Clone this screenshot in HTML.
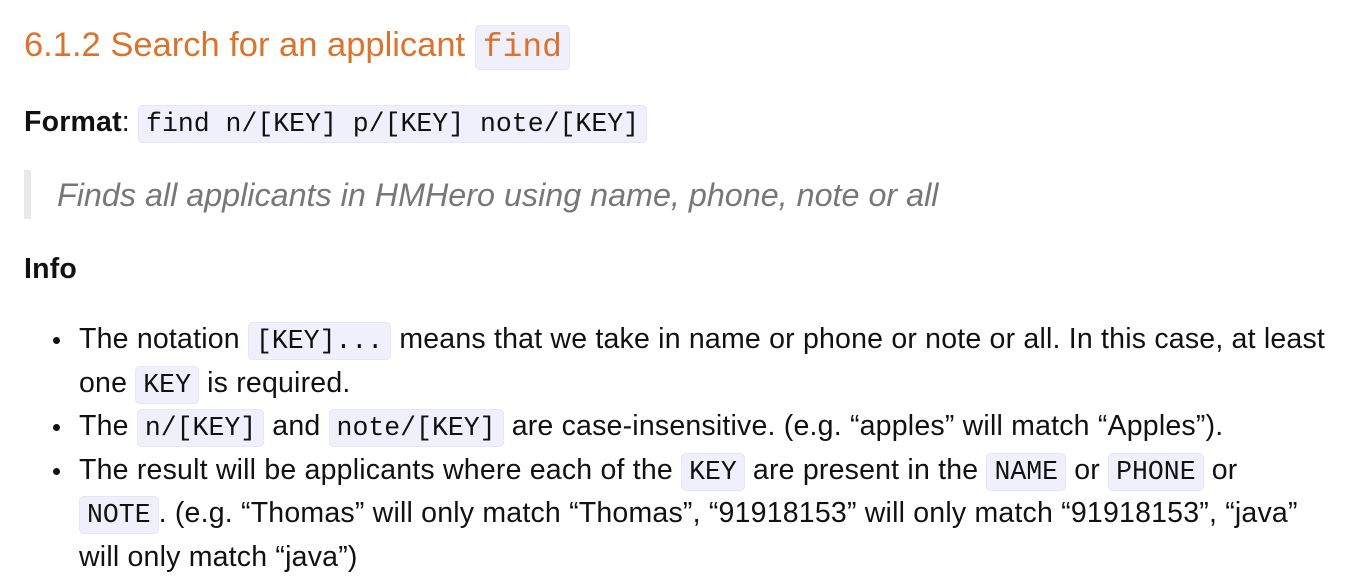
<!DOCTYPE html>
<html><head><meta charset="utf-8"><style>
body{margin:0;width:1364px;height:584px;background:#fff;font-family:"Liberation Sans",sans-serif;color:#111;overflow:hidden;position:relative}
.a{position:absolute;white-space:nowrap}
code{font-family:"Liberation Mono",monospace;background:#f0f0fc;border:1px solid #e6e6f4;border-radius:5px;padding:3px 7px;font-size:26.5px;line-height:1}
h2{margin:0;font-weight:400;color:#d9732e;font-size:34.5px}
h2 code{color:#d9732e;font-size:33px;padding:3px 7px}
.b{font-size:28.5px;line-height:43.5px;letter-spacing:0.2px}
.b code{letter-spacing:0}
ul{margin:0;padding:0 0 0 79px;list-style:none}
li{position:relative}
li:before{content:"";position:absolute;left:-26px;top:19px;width:7px;height:7px;border-radius:50%;background:#111}
</style></head><body>
<div class="a" style="left:24px;top:26px"><h2>6.1.2 Search for an applicant <code>find</code></h2></div>
<div class="a b" style="left:24px;top:101px"><b>Format</b>: <code>find n/[KEY] p/[KEY] note/[KEY]</code></div>
<div class="a" style="left:24px;top:170px;width:7px;height:49px;background:#e8e8e8"></div>
<div class="a" style="left:57px;top:177px;font-size:32.3px;font-style:italic;color:#777">Finds all applicants in HMHero using name, phone, note or all</div>
<div class="a b" style="left:24px;top:248px"><b>Info</b></div>
<div class="a b" style="left:0;top:318px;width:1364px">
<ul>
<li>The notation <code>[KEY]...</code> means that we take in name or phone or note or all. In this case, at least<br>one <code>KEY</code> is required.</li>
<li>The <code>n/[KEY]</code> and <code>note/[KEY]</code> are case-insensitive. (e.g. “apples” will match “Apples”).</li>
<li>The result will be applicants where each of the <code>KEY</code> are present in the <code>NAME</code> or <code>PHONE</code> or<br><code>NOTE</code>. (e.g. “Thomas” will only match “Thomas”, “91918153” will only match “91918153”, “java”<br>will only match “java”)</li>
</ul></div>
</body></html>
